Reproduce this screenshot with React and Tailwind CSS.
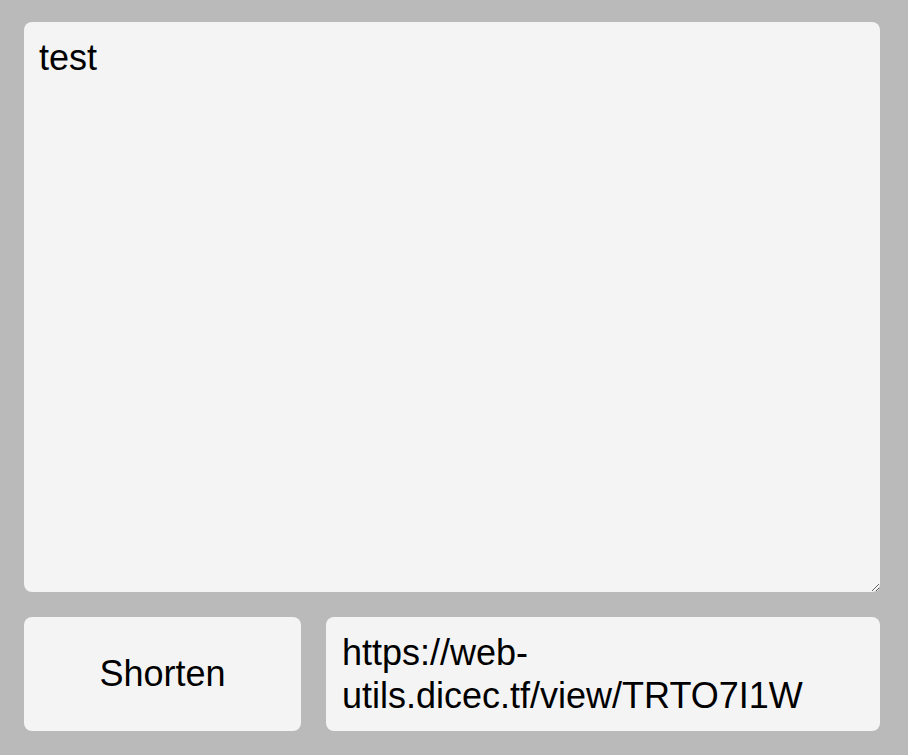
import React, { useState } from "react";

export default function App() {
  const [text, setText] = useState("test");

  return (
    <div
      className="min-h-[755px] w-full bg-[#bababa] pt-[22px] pb-[24px] pl-[24px] leading-[1.2]"
      style={{ fontFamily: '"Liberation Sans", Arial, sans-serif' }}
    >
      <div className="w-[856px] flex flex-col gap-[25px]">
        {/* ===== INPUT ===== */}
        <textarea
          value={text}
          onChange={e => setText(e.target.value)}
          className="block w-full h-[570px] bg-[#f4f4f4] rounded-[8px] border-0 outline-none px-[15px] pt-[14px] pb-[12px] text-[36px] leading-[1.2] text-black"
        />

        {/* ===== ACTIONS ===== */}
        <div className="grid grid-cols-[277px_1fr] gap-[25px] h-[114px]">
          <button className="bg-[#f4f4f4] rounded-[8px] text-[36px] leading-[1.2] text-black flex items-center justify-center">
            Shorten
          </button>
          <div className="bg-[#f4f4f4] rounded-[8px] px-[16px] pt-[14px] pb-[12px] text-[36px] leading-[1.2] text-black break-words">
            https://web-utils.dicec.tf/view/TRTO7I1W
          </div>
        </div>
      </div>
    </div>
  );
}
